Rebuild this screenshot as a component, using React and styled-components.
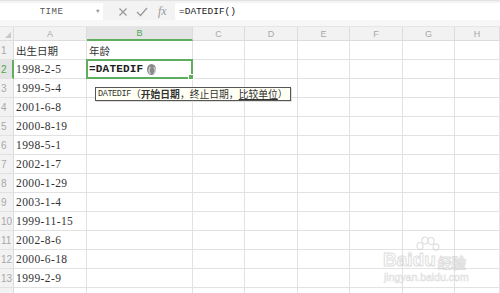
import React from "react";
import styled, { createGlobalStyle } from "styled-components";

const Global = createGlobalStyle`
  html, body { margin: 0; padding: 0; background: #fff; overflow: hidden; }
  body { font-family: "Liberation Serif", "Noto Sans CJK SC", serif; }
`;

const Page = styled.div`
  width: 500px;
  height: 293px;
  position: relative;
  overflow: hidden;
  background: #fff;
`;

const Toolbar = styled.div`
  height: 20px;
  display: flex;
  align-items: stretch;
  background: #f3f3f3;
  padding-top: 2px;
  box-sizing: border-box;
  border-top: 1px solid #e2e2e2;
`;

const NameBox = styled.div`
  width: 103px;
  background: #fff;
  display: flex;
  align-items: center;
  justify-content: center;
  position: relative;
  font-family: "Liberation Mono", monospace;
  font-size: 9px;
  color: #555;
  letter-spacing: 0.5px;
`;

const Caret = styled.span`
  position: absolute;
  right: 3px;
  top: 5px;
  font-size: 6px;
  color: #999;
`;

const IconGroup = styled.div`
  width: 72px;
  display: flex;
  align-items: center;
  gap: 8px;
  padding-left: 15px;
  box-sizing: border-box;
`;

const Fx = styled.span`
  font-family: "Liberation Serif", serif;
  font-style: italic;
  font-size: 12px;
  color: #999;
  margin-left: 2px;
`;

const Formula = styled.div`
  flex: 1;
  background: #fff;
  border-radius: 2px 0 0 2px;
  display: flex;
  align-items: center;
  padding-left: 4px;
  font-family: "Liberation Mono", monospace;
  font-size: 9.5px;
  color: #222;
`;

const Gap = styled.div`
  height: 6px;
  background: #f7f7f7;
  border-bottom: 1px solid #e6e6e6;
`;

const Grid = styled.div`
  display: grid;
  grid-template-columns: 14px 73px 106px 52px 53px 52px 53px 52px 1fr;
  grid-template-rows: 14px;
  grid-auto-rows: 19px;
`;

const ColHead = styled.div`
  background: ${(p) => (p.$active ? "#e4e4e4" : "#f2f2f2")};
  color: ${(p) => (p.$active ? "#4ea64e" : "#a8a8a8")};
  border-right: 1px solid #dcdcdc;
  border-bottom: ${(p) => (p.$active ? "2px solid #5fae5f" : "1px solid #dcdcdc")};
  box-sizing: border-box;
  display: flex;
  align-items: center;
  justify-content: center;
  font-family: "Liberation Sans", sans-serif;
  font-size: 9px;
  position: relative;
`;

const Corner = styled.div`
  position: absolute;
  right: 2px;
  bottom: 2px;
  width: 0;
  height: 0;
  border-left: 6px solid transparent;
  border-bottom: 6px solid #c8c8c8;
`;

const RowHead = styled.div`
  background: ${(p) => (p.$active ? "#e4e4e4" : "#f2f2f2")};
  color: ${(p) => (p.$active ? "#4ea64e" : "#a8a8a8")};
  border-right: ${(p) => (p.$active ? "2px solid #5fae5f" : "1px solid #dcdcdc")};
  border-bottom: 1px solid #e2e2e2;
  box-sizing: border-box;
  display: flex;
  align-items: center;
  justify-content: flex-start;
  padding-left: 1px;
  font-family: "Liberation Sans", sans-serif;
  font-size: 10px;
  overflow: hidden;
  white-space: nowrap;
`;

const Cell = styled.div`
  border-right: 1px solid #e2e2e2;
  border-bottom: 1px solid #e2e2e2;
  box-sizing: border-box;
  display: flex;
  align-items: center;
  padding-left: 2px;
  font-size: ${(p) => (p.$cjk ? "10.5px" : "11.5px")};
  letter-spacing: ${(p) => (p.$cjk ? "0" : "0.4px")};
  font-family: ${(p) =>
    p.$cjk
      ? '"Noto Sans CJK SC", sans-serif'
      : '"Liberation Serif", "Noto Sans CJK SC", serif'};
  color: #333;
  white-space: nowrap;
  position: relative;
`;

const ActiveCell = styled(Cell)`
  border: 2px solid #5fae5f;
  margin: -1px 0 0 -1px;
  width: calc(100% + 1px);
  height: calc(100% + 1px);
  font-family: "Liberation Mono", monospace;
  font-weight: bold;
  font-size: 11px;
  letter-spacing: 0.2px;
  color: #222;
  padding-left: 1px;
  overflow: visible;
  z-index: 2;
`;

const Handle = styled.span`
  position: absolute;
  right: -3px;
  bottom: -3px;
  width: 4px;
  height: 4px;
  background: #5fae5f;
  border: 1px solid #fff;
`;

const Paren = styled.span`
  display: inline-flex;
  align-items: center;
  justify-content: center;
  margin-left: 4px;
  width: 9px;
  height: 11px;
  border-radius: 50%;
  background: #8a8a8a;
  color: #fff;
  font-size: 8px;
  font-weight: normal;
  letter-spacing: 0;
`;

const Tooltip = styled.div`
  position: absolute;
  left: 95px;
  top: 87px;
  height: 14px;
  padding: 0 2px;
  box-sizing: border-box;
  background: #fffff4;
  border: 1px solid #555;
  display: flex;
  align-items: center;
  white-space: nowrap;
  font-family: "Noto Sans CJK SC", sans-serif;
  font-size: 9.8px;
  color: #333;
  box-shadow: 1px 1px 0 #ddd;
  z-index: 5;
`;

const TipFn = styled.span`
  font-family: "Liberation Mono", monospace;
  font-size: 8.5px;
  letter-spacing: -0.4px;
`;

const TipBold = styled.b`
  font-weight: 700;
`;

const TipU = styled.span`
  text-decoration: underline;
  text-underline-offset: 1px;
`;

const Watermark = styled.div`
  position: absolute;
  left: 383px;
  top: 238px;
  display: flex;
  flex-direction: column;
  align-items: flex-start;
  opacity: 0.6;
  pointer-events: none;
  z-index: 4;
`;

const WmTop = styled.div`
  display: flex;
  align-items: flex-end;
  font-family: "Liberation Sans", sans-serif;
  font-weight: bold;
  font-size: 19px;
  color: #fff;
  -webkit-text-stroke: 1px #cacaca;
  line-height: 1;
  margin-top: 12px;
`;

const WmCjk = styled.span`
  font-family: "Noto Sans CJK SC", sans-serif;
  font-size: 14px;
  margin-left: 2px;
`;

const WmUrl = styled.div`
  font-family: "Liberation Sans", sans-serif;
  font-size: 10.5px;
  color: #fff;
  -webkit-text-stroke: 0.6px #cacaca;
  margin-top: 2px;
  margin-left: 1px;
`;

const DuWrap = styled.span`
  position: relative;
  display: inline-block;
`;

const Paw = styled.svg`
  position: absolute;
  left: 1px;
  top: -14px;
`;

const dates = [
  "1998-2-5",
  "1999-5-4",
  "2001-6-8",
  "2000-8-19",
  "1998-5-1",
  "2002-1-7",
  "2000-1-29",
  "2003-1-4",
  "1999-11-15",
  "2002-8-6",
  "2000-6-18",
  "1999-2-9",
];

const cols = ["A", "B", "C", "D", "E", "F", "G", "H"];
const extraCols = 6;

export default function App() {
  const rows = [];
  for (let r = 1; r <= 14; r++) {
    const cells = [];
    cells.push(
      <RowHead key="h" $active={r === 2}>
        {r <= 13 ? r : ""}
      </RowHead>
    );
    let a = "";
    let cjkA = false;
    if (r === 1) {
      a = "出生日期";
      cjkA = true;
    } else if (dates[r - 2]) a = dates[r - 2];
    cells.push(
      <Cell key="a" $cjk={cjkA}>
        {a}
      </Cell>
    );
    if (r === 2) {
      cells.push(
        <ActiveCell key="b">
          =DATEDIF<Paren>()</Paren>
          <Handle />
        </ActiveCell>
      );
    } else {
      cells.push(
        <Cell key="b" $cjk>
          {r === 1 ? "年龄" : ""}
        </Cell>
      );
    }
    for (let c = 0; c < extraCols; c++) cells.push(<Cell key={"c" + c} />);
    rows.push(<React.Fragment key={r}>{cells}</React.Fragment>);
  }

  return (
    <Page>
      <Global />
      <Toolbar>
        <NameBox>
          TIME
          <Caret>▼</Caret>
        </NameBox>
        <IconGroup>
          <svg width="10" height="10" viewBox="0 0 10 10">
            <path d="M1.5 1.5 L8.5 8.5 M8.5 1.5 L1.5 8.5" stroke="#9a9a9a" strokeWidth="1.3" fill="none" />
          </svg>
          <svg width="12" height="10" viewBox="0 0 12 10">
            <path d="M1 5 L4.5 8.5 L11 1" stroke="#9a9a9a" strokeWidth="1.3" fill="none" />
          </svg>
          <Fx>fx</Fx>
        </IconGroup>
        <Formula>=DATEDIF()</Formula>
      </Toolbar>
      <Gap />
      <Grid>
        <ColHead>
          <Corner />
        </ColHead>
        {cols.map((c) => (
          <ColHead key={c} $active={c === "B"}>
            {c}
          </ColHead>
        ))}
        {rows}
      </Grid>
      <Tooltip>
        <TipFn>DATEDIF</TipFn>（<TipBold>开始日期</TipBold>，终止日期，<TipU>比较单位</TipU>）
      </Tooltip>
      <Watermark>
        <WmTop>
          Bai
          <DuWrap>
            <Paw width="26" height="18" viewBox="0 0 26 18">
              <g fill="#fff" stroke="#cacaca" strokeWidth="1.2">
                <ellipse cx="6" cy="10" rx="3" ry="3.5" />
                <ellipse cx="11" cy="4.5" rx="3" ry="3.5" />
                <ellipse cx="17" cy="5" rx="3" ry="3.5" />
                <ellipse cx="22" cy="11" rx="2.8" ry="3.2" />
              </g>
            </Paw>
            du
          </DuWrap>
          <WmCjk>经验</WmCjk>
        </WmTop>
        <WmUrl>jingyan.baidu.com</WmUrl>
      </Watermark>
    </Page>
  );
}
